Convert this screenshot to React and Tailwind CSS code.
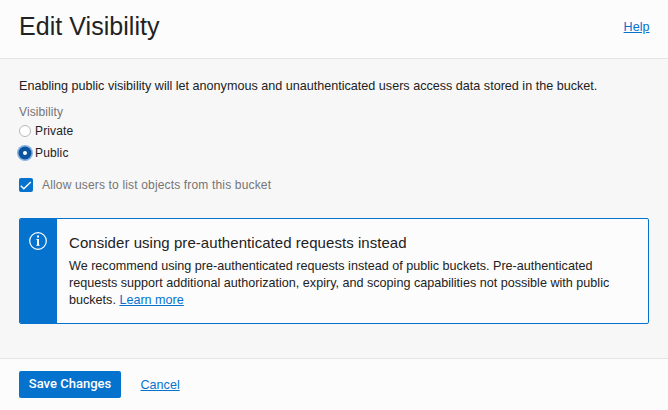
function Radio({ label, selected }) {
  return (
    <div className="flex h-[22px] items-center gap-[4px]">
      {selected ? (
        <span className="flex size-[12px] shrink-0 items-center justify-center rounded-full bg-[#0a559e] shadow-[0_0_0_0.5px_#0a559e,0_0_0_2px_#8ab4e2]">
          <span className="size-[4px] rounded-full bg-white" />
        </span>
      ) : (
        <span className="size-[12px] shrink-0 rounded-full border border-[#b5b8bb] bg-white" />
      )}
      <span className="text-[12px] leading-[16px] tracking-[0.15px] text-[#222]">{label}</span>
    </div>
  );
}

export default function App() {
  return (
    <div className="flex h-[410px] w-[668px] flex-col overflow-hidden bg-[#f7f7f7] font-['Liberation_Sans',Arial,sans-serif] text-[12px] text-[#222]">
      <header className="flex h-[59px] shrink-0 justify-between border-b border-[#e5e5e5] bg-[#fcfcfc] pr-[18.5px] pl-[19px]">
        <h1 className="pt-[11px] text-[25px] leading-[30px] tracking-[0.05px]">Edit Visibility</h1>
        <a className="pt-[19px] text-[12.6px] leading-[16px] text-[#0572ce] underline">Help</a>
      </header>

      <main className="flex h-[299px] shrink-0 flex-col px-[19px] pt-[19px]">
        <p className="text-[12.6px] leading-[16px] whitespace-nowrap">
          Enabling public visibility will let anonymous and unauthenticated users access data stored in the bucket.
        </p>
        <div className="mt-[11px] h-[15px] text-[12px] leading-[15px] tracking-[0.1px] text-[#757575]">Visibility</div>
        <Radio label="Private" />
        <Radio label="Public" selected />
        <div className="mt-[12px] flex h-[17px] items-center gap-[9px] text-[#757575]">
          <span className="flex size-[14px] items-center justify-center rounded-[2px] bg-[#0572ce]">
            <svg className="size-[14px]" viewBox="0 0 14 14" fill="none" stroke="white" strokeWidth="1.4">
              <path d="M1.8 7.7 4.8 10.7 11.8 4" />
            </svg>
          </span>
          <span className="leading-[16px] tracking-[0.16px]">Allow users to list objects from this bucket</span>
        </div>

        <section className="mt-[25px] flex h-[106px] w-[630px] overflow-hidden rounded-[2px] border border-[#0572ce] bg-[#fcfcfc]">
          <div className="flex w-[37px] shrink-0 justify-center bg-[#0572ce] pt-[13px] pr-px">
            <svg className="size-[18px]" viewBox="0 0 18 18" fill="none" stroke="white">
              <circle cx="9" cy="9" r="8.3" strokeWidth="1.2" />
              <path d="M9 3.5v2M9 7v6.5" strokeWidth="2" />
              <path d="M7.3 7.5H9M7.3 13.3h3.4" strokeWidth="0.8" />
            </svg>
          </div>
          <div className="pt-[14px] pl-[12px] whitespace-nowrap">
            <h2 className="text-[15px] leading-[20px] tracking-[0.05px]">Consider using pre-authenticated requests instead</h2>
            <p className="mt-[5px] text-[12.6px] leading-[17px]">
              We recommend using pre-authenticated requests instead of public buckets. Pre-authenticated
              <br />
              requests support additional authorization, expiry, and scoping capabilities not possible with public
              <br />
              buckets. <a className="text-[#0572ce] underline">Learn more</a>
            </p>
          </div>
        </section>
      </main>

      <footer className="flex h-[52px] shrink-0 items-start border-t border-[#e5e5e5] bg-[#fcfcfc] pt-[12px] pl-[19px]">
        <button className="h-[27px] w-[102px] rounded-[2px] bg-[#0572ce] pb-[2px] font-['Roboto',sans-serif] text-[13px] font-medium text-white">
          Save Changes
        </button>
        <a className="mt-[6px] ml-[19.5px] text-[12.6px] leading-[16px] text-[#0572ce] underline">Cancel</a>
      </footer>
    </div>
  );
}
